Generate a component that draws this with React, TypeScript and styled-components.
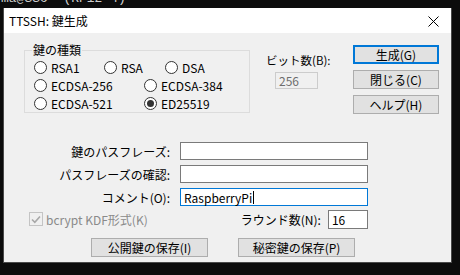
import React from "react";
import styled, { createGlobalStyle } from "styled-components";

const Global = createGlobalStyle`
  html, body { margin: 0; padding: 0; background: #0c0c0c; }
  body { width: 460px; height: 275px; overflow: hidden; }
  * { box-sizing: border-box; }
`;

const FONT = `"MS UI Gothic", "Noto Sans CJK JP", "Noto Sans", sans-serif`;

const Desktop = styled.div`
  position: relative;
  width: 460px;
  height: 275px;
  background: #0c0c0c;
  overflow: hidden;
`;

const Terminal = styled.div`
  height: 8px;
  overflow: hidden;
  position: relative;
`;

const TermLine = styled.div`
  margin-top: -9px;
  padding-left: 1px;
  font-family: "Liberation Mono", monospace;
  font-size: 13px;
  line-height: 16px;
  color: #cccccc;
  white-space: pre;
`;

const Dialog = styled.div`
  position: absolute;
  left: 3px;
  top: 8px;
  width: 449px;
  height: 255px;
  background: #f0f0f0;
  border: 1px solid #4a4a4a;
  border-top: none;
  display: flex;
  flex-direction: column;
  font-family: ${FONT};
  font-size: 12px;
  color: #000;
`;

const TitleBar = styled.div`
  height: 25px;
  background: #ffffff;
  display: flex;
  align-items: center;
  justify-content: space-between;
  padding: 0 8px 0 5px;
`;

const Title = styled.span`
  font-family: "Noto Sans CJK JP", "Noto Sans", sans-serif;
  font-size: 12px;
  color: #000;
`;

const Close = styled.div`
  width: 20px;
  height: 20px;
  display: flex;
  align-items: center;
  justify-content: center;
  margin-top: 1px;
`;

const Body = styled.div`
  flex: 1;
  display: flex;
  flex-direction: column;
  padding-top: 12px;
`;

const TopRow = styled.div`
  display: flex;
  align-items: flex-start;
  padding-left: 20px;
`;

const GroupBox = styled.div`
  position: relative;
  width: 226px;
  height: 63px;
  margin-top: 5px;
  border: 1px solid #dcdcdc;
  padding: 7px 0 0 9px;
  display: flex;
  flex-direction: column;
`;

const Legend = styled.span`
  position: absolute;
  left: 7px;
  top: -8px;
  padding: 0 1px;
  background: #f0f0f0;
  line-height: 14px;
`;

const RadioRow = styled.div`
  display: flex;
  align-items: center;
  height: 18px;
`;

const RadioItem = styled.label<{ $w: number }>`
  display: flex;
  align-items: center;
  width: ${(p) => p.$w}px;
  gap: 4px;
  white-space: nowrap;
`;

const RadioCircle = styled.span<{ $on?: boolean }>`
  width: 13px;
  height: 13px;
  border-radius: 50%;
  border: 1px solid #333333;
  background: #ffffff;
  display: flex;
  align-items: center;
  justify-content: center;
  flex: none;
  &::after {
    content: "";
    width: 7px;
    height: 7px;
    border-radius: 50%;
    background: ${(p) => (p.$on ? "#333333" : "transparent")};
  }
`;

const BitCol = styled.div`
  width: 87px;
  margin-left: 16px;
  padding-top: 8px;
  display: flex;
  flex-direction: column;
`;

const BitLabel = styled.span`
  line-height: 14px;
  white-space: nowrap;
  font-size: 11.5px;
`;

const BitInput = styled.div`
  margin: 5px 0 0 9px;
  width: 43px;
  height: 17px;
  border: 1px solid #cccccc;
  background: #f0f0f0;
  color: #6d6d6d;
  padding-left: 3px;
  line-height: 15px;
  font-size: 12px;
`;

const ButtonCol = styled.div`
  display: flex;
  flex-direction: column;
  gap: 6px;
`;

const Button = styled.div<{ $w?: number; $default?: boolean }>`
  width: ${(p) => p.$w ?? 86}px;
  height: 19px;
  background: #e1e1e1;
  border: ${(p) => (p.$default ? "2px solid #0078d7" : "1px solid #adadad")};
  display: flex;
  align-items: center;
  justify-content: center;
  white-space: nowrap;
  line-height: 14px;
`;

const Form = styled.div`
  margin-top: 28px;
  display: grid;
  grid-template-columns: 166px 188px;
  column-gap: 10px;
  row-gap: 5px;
`;

const FieldLabel = styled.span`
  text-align: right;
  align-self: center;
  white-space: nowrap;
`;

const TextInput = styled.div<{ $focus?: boolean }>`
  height: 18px;
  background: #ffffff;
  border: 1px solid ${(p) => (p.$focus ? "#0078d7" : "#7a7a7a")};
  padding-left: 3px;
  display: flex;
  align-items: center;
  font-size: 12px;
`;

const Caret = styled.span`
  display: inline-block;
  width: 1px;
  height: 13px;
  background: #000;
  margin-left: 1px;
`;

const OptionRow = styled.div`
  margin-top: 4px;
  display: flex;
  align-items: center;
  height: 18px;
  padding-left: 25px;
`;

const Check = styled.span`
  width: 14px;
  height: 14px;
  border: 1px solid #c4c4c4;
  background: #f0f0f0;
  display: flex;
  align-items: center;
  justify-content: center;
  flex: none;
`;

const CheckText = styled.span`
  margin-left: 3px;
  color: #8a8a8a;
  white-space: nowrap;
  width: 222px;
`;

const RoundLabel = styled.span`
  white-space: nowrap;
  margin-left: auto;
  margin-right: 7px;
`;

const RoundInput = styled(TextInput)`
  width: 45px;
  margin-right: 83px;
  height: 19px;
`;

const BottomRow = styled.div`
  margin-top: 10px;
  display: flex;
  padding-left: 87px;
  gap: 30px;
`;

const radios1 = [
  { t: "RSA1", w: 70 },
  { t: "RSA", w: 61 },
  { t: "DSA", w: 60 },
];

export default function App() {
  return (
    <>
      <Global />
      <Desktop>
        <Terminal>
          <TermLine>{"ma@SSO  (RPi2-4)  ***"}</TermLine>
        </Terminal>
        <Dialog>
          <TitleBar>
            <Title>TTSSH: 鍵生成</Title>
            <Close>
              <svg width="11" height="11" viewBox="0 0 11 11">
                <path d="M0.5 0.5 L10.5 10.5 M10.5 0.5 L0.5 10.5" stroke="#000" strokeWidth="1" />
              </svg>
            </Close>
          </TitleBar>
          <Body>
            <TopRow>
              <GroupBox>
                <Legend>鍵の種類</Legend>
                <RadioRow>
                  {radios1.map((r) => (
                    <RadioItem key={r.t} $w={r.w}>
                      <RadioCircle />
                      {r.t}
                    </RadioItem>
                  ))}
                </RadioRow>
                <RadioRow>
                  <RadioItem $w={110}>
                    <RadioCircle />
                    ECDSA-256
                  </RadioItem>
                  <RadioItem $w={100}>
                    <RadioCircle />
                    ECDSA-384
                  </RadioItem>
                </RadioRow>
                <RadioRow>
                  <RadioItem $w={110}>
                    <RadioCircle />
                    ECDSA-521
                  </RadioItem>
                  <RadioItem $w={100}>
                    <RadioCircle $on />
                    ED25519
                  </RadioItem>
                </RadioRow>
              </GroupBox>
              <BitCol>
                <BitLabel>ビット数(B):</BitLabel>
                <BitInput>256</BitInput>
              </BitCol>
              <ButtonCol>
                <Button $default>生成(G)</Button>
                <Button>閉じる(C)</Button>
                <Button>ヘルプ(H)</Button>
              </ButtonCol>
            </TopRow>
            <Form>
              <FieldLabel>鍵のパスフレーズ:</FieldLabel>
              <TextInput />
              <FieldLabel>パスフレーズの確認:</FieldLabel>
              <TextInput />
              <FieldLabel>コメント(O):</FieldLabel>
              <TextInput $focus>
                RaspberryPi
                <Caret />
              </TextInput>
            </Form>
            <OptionRow>
              <Check>
                <svg width="10" height="9" viewBox="0 0 10 9">
                  <path d="M1 4.5 L3.8 7.3 L9 1.5" stroke="#a8a8a8" strokeWidth="1.6" fill="none" />
                </svg>
              </Check>
              <CheckText>bcrypt KDF形式(K)</CheckText>
              <RoundLabel>ラウンド数(N):</RoundLabel>
              <RoundInput>16</RoundInput>
            </OptionRow>
            <BottomRow>
              <Button $w={117}>公開鍵の保存(I)</Button>
              <Button $w={117}>秘密鍵の保存(P)</Button>
            </BottomRow>
          </Body>
        </Dialog>
      </Desktop>
    </>
  );
}
